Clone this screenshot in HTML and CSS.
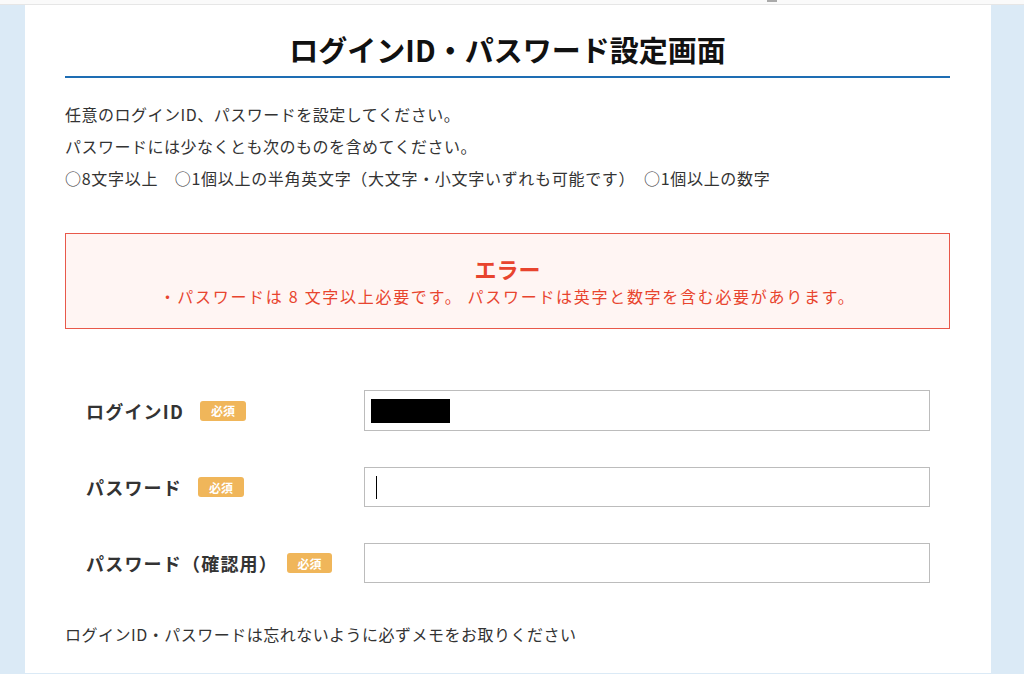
FILE: index.html
```html
<!DOCTYPE html>
<html lang="ja">
<head>
<meta charset="utf-8">
<title>ログインID・パスワード設定画面</title>
<link rel="stylesheet" href="styles.css">
</head>
<body>
<div class="topbar"><span class="topbar-mark"></span></div>
<main class="panel">
  <h1 class="title">ログインID・パスワード設定画面</h1>
  <div class="intro">
    <p>任意のログインID、パスワードを設定してください。</p>
    <p>パスワードには少なくとも次のものを含めてください。</p>
    <p>○8文字以上　○1個以上の半角英文字（大文字・小文字いずれも可能です）　○1個以上の数字</p>
  </div>
  <div class="error">
    <p class="error-title">エラー</p>
    <p class="error-msg">・パスワードは 8 文字以上必要です。 パスワードは英字と数字を含む必要があります。</p>
  </div>
  <form class="form">
    <div class="row">
      <label class="label">ログインID<span class="badge">必須</span></label>
      <div class="input input-first"><span class="masked"></span></div>
    </div>
    <div class="row">
      <label class="label">パスワード<span class="badge">必須</span></label>
      <div class="input"><span class="caret"></span></div>
    </div>
    <div class="row">
      <label class="label">パスワード（確認用）<span class="badge badge-tight">必須</span></label>
      <div class="input"></div>
    </div>
  </form>
  <p class="note">ログインID・パスワードは忘れないように必ずメモをお取りください</p>
</main>
</body>
</html>
```
FILE: styles.css
```css
* { box-sizing: border-box; }
html, body { margin: 0; padding: 0; }
body {
  background: #dbeaf6;
  font-family: "Noto Sans CJK JP", "Noto Sans", sans-serif;
  color: #333;
  height: 674px;
  overflow: hidden;
}
p { margin: 0; }
.topbar {
  height: 5px;
  background: #fafafa;
  border-bottom: 1px solid #e6e6e6;
  position: relative;
}
.topbar-mark {
  position: absolute;
  left: 767px;
  top: 0;
  width: 10px;
  height: 2px;
  background: #aaa;
}
.panel {
  margin-left: 25px;
  width: 966px;
  height: 668px;
  background: #fff;
  padding: 24px 41px 0 40px;
  overflow: hidden;
}
.title {
  margin: 0;
  text-align: center;
  font-size: 29px;
  font-weight: 700;
  letter-spacing: 0;
  line-height: 40px;
  color: #111;
  padding-bottom: 7px;
  border-bottom: 2px solid #1e6db3;
}
.intro {
  margin-top: 20px;
  font-size: 16px;
  line-height: 32px;
  letter-spacing: 0.5px;
}
.intro p:last-child { letter-spacing: 0.7px; }
.error {
  margin-top: 39px;
  border: 1px solid #e8584a;
  background: #fff5f3;
  text-align: center;
  color: #e8442e;
  padding: 20px 0 18px;
}
.error-title {
  font-size: 22px;
  font-weight: 700;
  line-height: 28px;
}
.error-msg {
  font-size: 16px;
  line-height: 28px;
  letter-spacing: 1.7px;
}
.form {
  margin-top: 61px;
  display: flex;
  flex-direction: column;
  gap: 36px;
}
.row {
  display: flex;
  align-items: center;
}
.label {
  width: 299px;
  padding-left: 21px;
  font-size: 18px;
  font-weight: 700;
  letter-spacing: 1.2px;
  color: #333;
  display: flex;
  align-items: center;
}
.badge {
  margin-left: 16px;
  background: #f0b65a;
  color: #fff;
  font-size: 12px;
  font-weight: 700;
  letter-spacing: 0;
  border-radius: 3px;
  width: 46px;
  height: 20px;
  display: inline-flex;
  align-items: center;
  justify-content: center;
}
.badge-tight { margin-left: 9px; width: 45px; }
.input {
  width: 566px;
  height: 40px;
  border: 1px solid #bcbcbc;
  display: flex;
  align-items: center;
  padding-left: 6px;
}
.input-first { height: 41px; }
.masked {
  width: 79px;
  height: 24px;
  background: #000;
}
.caret {
  margin-left: 5px;
  width: 1px;
  height: 23px;
  background: #000;
}
.note {
  margin-top: 39px;
  font-size: 16px;
  line-height: 24px;
  letter-spacing: 0.5px;
}
```
